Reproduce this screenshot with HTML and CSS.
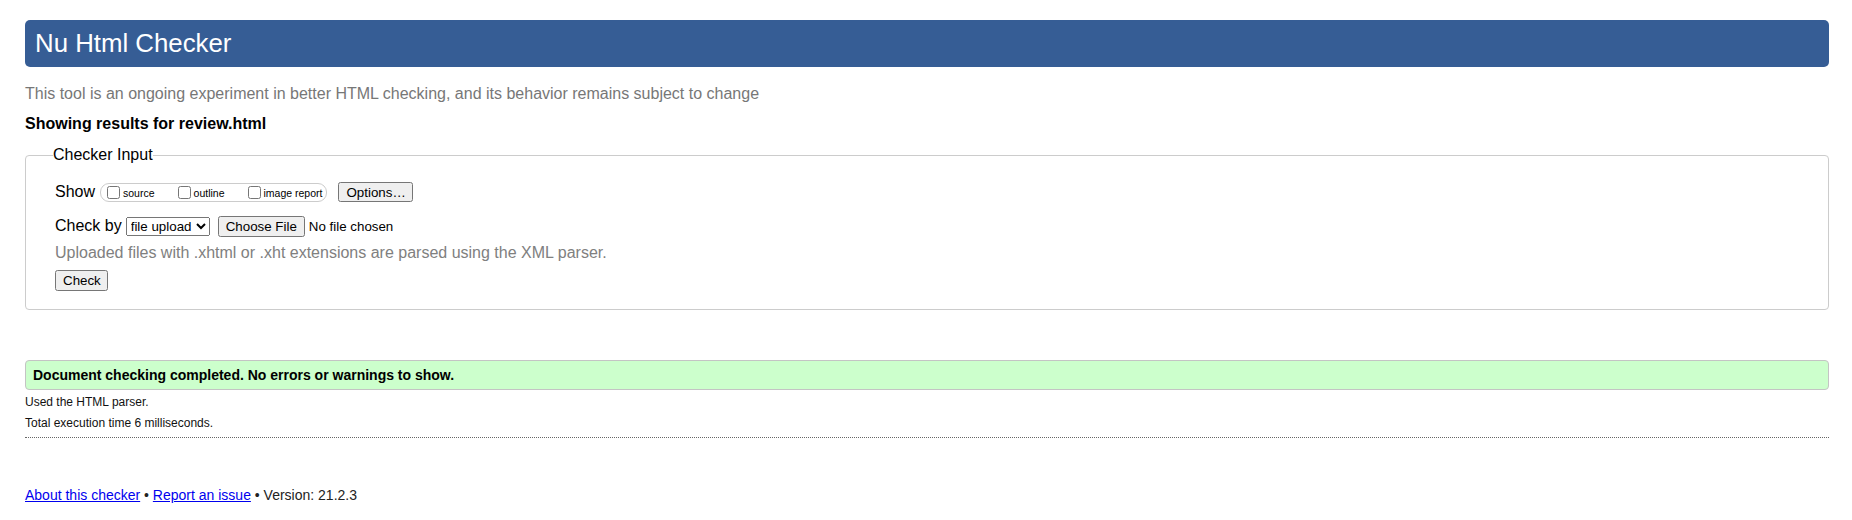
FILE: index.html
```html
<!DOCTYPE html>
<html lang="en">
<head>
<meta charset="utf-8">
<title>Showing results for review.html - Nu Html Checker</title>
<link rel="stylesheet" href="styles.css">
</head>
<body>
<h1 class="title">Nu Html Checker</h1>
<p class="intro">This tool is an ongoing experiment in better HTML checking, and its behavior remains subject to change</p>
<h2 class="results">Showing results for review.html</h2>
<form class="checker-form">
  <fieldset class="checker-input">
    <legend class="legend">Checker Input</legend>
    <div class="row">
      <span class="row-label">Show</span>
      <span class="show-group">
        <label class="opt"><input type="checkbox" class="cb"><span>source</span></label>
        <label class="opt"><input type="checkbox" class="cb"><span>outline</span></label>
        <label class="opt opt-last"><input type="checkbox" class="cb"><span>image report</span></label>
      </span>
      <button type="button" class="btn btn-options">Options…</button>
    </div>
    <div class="row row-check">
      <span class="row-label">Check by</span>
      <select class="sel">
        <option>file upload</option>
      </select>
      <input type="file" class="file">
    </div>
    <p class="note">Uploaded files with .xhtml or .xht extensions are parsed using the XML parser.</p>
    <div class="row row-submit">
      <button type="button" class="btn">Check</button>
    </div>
  </fieldset>
</form>
<p class="success">Document checking completed. No errors or warnings to show.</p>
<p class="details">Used the HTML parser.</p>
<p class="details details-time">Total execution time 6 milliseconds.</p>
<hr class="rule">
<p class="footer"><a href="#">About this checker</a> • <a href="#">Report an issue</a> • Version: 21.2.3</p>
</body>
</html>
```
FILE: styles.css
```css
html, body {
  background: #fff;
  color: #000;
}
body {
  margin: 0;
  padding: 20px 23px 0 25px;
  font-family: "Liberation Sans", Arial, sans-serif;
  font-size: 16px;
}
.title {
  margin: 0;
  height: 47px;
  padding: 0 10px;
  font-size: 25.8px;
  font-weight: normal;
  line-height: 47px;
  color: #fff;
  background: #365d95;
  border-radius: 5px;
}
.intro {
  margin: 18px 0 0;
  line-height: 18px;
  color: #777;
}
.results {
  margin: 12px 0 0;
  font-size: 16px;
  line-height: 18px;
  font-weight: bold;
}
.checker-form {
  margin: 13px 0 0;
}
.checker-input {
  margin: 0;
  padding: 18px 28px 18px 29px;
  border: 1px solid #ccc;
  border-radius: 4px;
  min-width: 0;
}
.legend {
  padding: 0;
  margin-left: -2px;
  line-height: 18px;
  font-size: 16px;
}
.row {
  display: flex;
  align-items: center;
  height: 20px;
}
.row-label {
  line-height: 18px;
}
.show-group {
  display: flex;
  align-items: center;
  height: 17px;
  margin-left: 5px;
  padding: 0 4px 0 2px;
  border: 1px solid #ccc;
  border-radius: 9px;
}
.opt {
  display: flex;
  align-items: center;
  font-size: 10.5px;
  margin-right: 19px;
}
.opt-last {
  margin-right: 0;
}
.cb {
  width: 13px;
  height: 13px;
  margin: 0 3px 0 4px;
}
.opt span {
  position: relative;
  top: 1px;
}
.btn {
  font-family: "Liberation Sans", Arial, sans-serif;
  font-size: 13.33px;
  height: 20px;
  padding: 0 6px;
  margin: 0;
}
.btn-options {
  margin-left: 11px;
  width: 75px;
}
.row-check {
  margin-top: 14px;
}
.sel {
  margin: 0 0 0 4px;
  width: 84px;
  height: 19px;
  font-family: "Liberation Sans", Arial, sans-serif;
  font-size: 13.33px;
  padding: 0;
}
.file {
  margin-left: 8px;
  font-family: "Liberation Sans", Arial, sans-serif;
  font-size: 13.33px;
}
.note {
  margin: 8px 0 0;
  line-height: 18px;
  color: #808080;
}
.row-submit {
  margin-top: 8px;
  height: 21px;
}
.row-submit .btn {
  height: 21px;
  width: 53px;
}
.success {
  margin: 50px 0 0;
  height: 28px;
  padding: 0 7px;
  line-height: 28px;
  font-size: 14px;
  font-weight: bold;
  background: #ccffcc;
  border: 1px solid #c4c4c4;
  border-radius: 4px;
}
.details {
  margin: 5px 0 0;
  font-size: 12px;
  line-height: 14px;
  color: #111;
}
.details-time {
  margin-top: 7px;
}
.rule {
  margin: 7px 0 0;
  border: 0;
  border-top: 1px dotted #666;
  height: 0;
}
.footer {
  margin: 49px 0 0;
  font-size: 14px;
  line-height: 16px;
  color: #222;
}
.footer a {
  color: #0000ee;
}
```
